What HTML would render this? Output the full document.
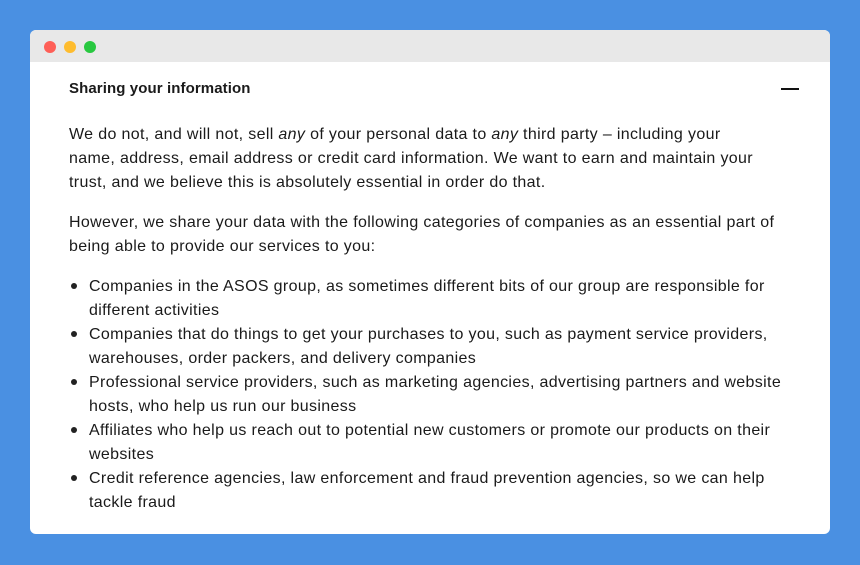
<!DOCTYPE html>
<html><head><meta charset="utf-8"><style>
html,body{margin:0;padding:0;}
body{width:860px;height:565px;background:#4a90e2;position:relative;overflow:hidden;font-family:"Liberation Sans",sans-serif;color:#1a1a1a;}
.win{position:absolute;left:30px;top:30px;width:800px;height:504px;background:#fff;border-radius:6px;overflow:hidden;}
.bar{height:32px;background:#e8e8e8;position:relative;}
.dot{position:absolute;top:11px;width:12px;height:12px;border-radius:50%;}
.t{position:absolute;left:39px;white-space:nowrap;font-size:16px;letter-spacing:0.35px;}
.h{position:absolute;left:39px;top:50px;font-weight:bold;font-size:15px;letter-spacing:0.1px;}
.minus{position:absolute;left:751px;top:58px;width:18px;height:2px;background:#111;}
.b{position:absolute;left:41px;width:6px;height:6px;border-radius:50%;background:#222;}
.li{left:59px;}
</style></head><body>
<div class="win">
<div class="bar">
<div class="dot" style="left:14px;background:#fe5f57"></div>
<div class="dot" style="left:34px;background:#febc2e"></div>
<div class="dot" style="left:54px;background:#28c840"></div>
</div>
<div class="h">Sharing your information</div>
<div class="minus"></div>
<div class="t" style="top:96px">We do not, and will not, sell <i>any</i> of your personal data to <i>any</i> third party – including your</div>
<div class="t" style="top:120px">name, address, email address or credit card information. We want to earn and maintain your</div>
<div class="t" style="top:144px">trust, and we believe this is absolutely essential in order do that.</div>
<div class="t" style="top:184px">However, we share your data with the following categories of companies as an essential part of</div>
<div class="t" style="top:208px">being able to provide our services to you:</div>
<div class="b" style="top:253px"></div>
<div class="t li" style="top:248px">Companies in the ASOS group, as sometimes different bits of our group are responsible for</div>
<div class="t li" style="top:272px">different activities</div>
<div class="b" style="top:301px"></div>
<div class="t li" style="top:296px">Companies that do things to get your purchases to you, such as payment service providers,</div>
<div class="t li" style="top:320px">warehouses, order packers, and delivery companies</div>
<div class="b" style="top:349px"></div>
<div class="t li" style="top:344px">Professional service providers, such as marketing agencies, advertising partners and website</div>
<div class="t li" style="top:368px">hosts, who help us run our business</div>
<div class="b" style="top:397px"></div>
<div class="t li" style="top:392px">Affiliates who help us reach out to potential new customers or promote our products on their</div>
<div class="t li" style="top:416px">websites</div>
<div class="b" style="top:445px"></div>
<div class="t li" style="top:440px">Credit reference agencies, law enforcement and fraud prevention agencies, so we can help</div>
<div class="t li" style="top:464px">tackle fraud</div>
</div>
</body></html>
